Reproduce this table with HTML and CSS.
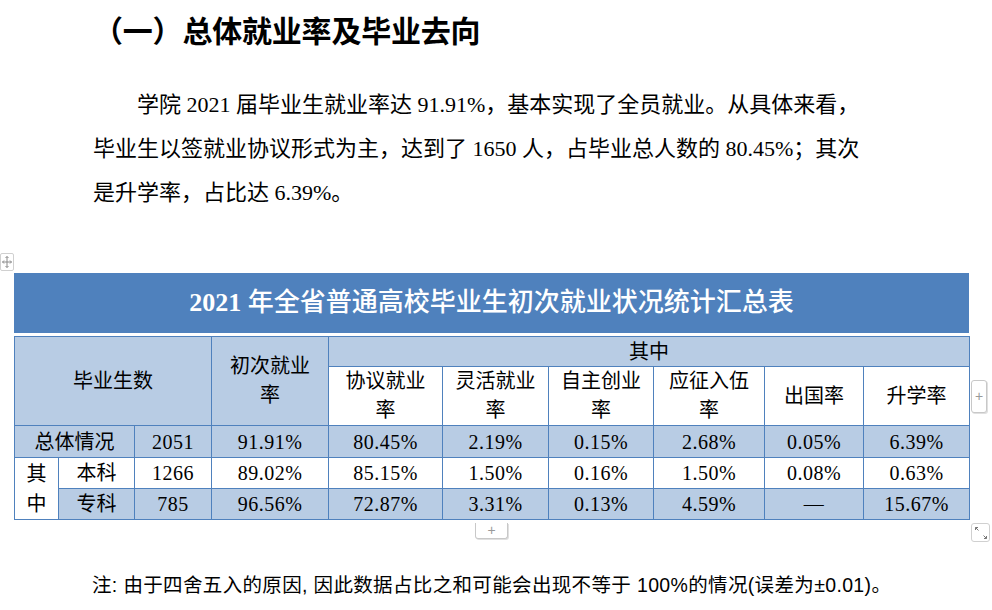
FILE: index.html
```html
<!DOCTYPE html>
<html lang="zh-CN">
<head>
<meta charset="utf-8">
<title>总体就业率及毕业去向</title>
<link rel="stylesheet" href="styles.css">
</head>
<body>
<h1 class="heading">（一）总体就业率及毕业去向</h1>
<p class="intro">学院 2021 届毕业生就业率达 91.91%，基本实现了全员就业。从具体来看，<br>毕业生以签就业协议形式为主，达到了 1650 人，占毕业总人数的 80.45%；其次<br>是升学率，占比达 6.39%。</p>

<div class="table-wrap">
  <div class="move-handle">
    <svg width="12" height="14" viewBox="0 0 12 14" fill="none" stroke="#8a8a8a" stroke-width="1">
      <path d="M6 1.5v11M1.5 7h9"/>
      <path d="M4.5 3L6 1.5 7.5 3M4.5 11L6 12.5 7.5 11M3 5.5L1.5 7 3 8.5M9 5.5L10.5 7 9 8.5"/>
    </svg>
  </div>
  <div class="tbl-title"><span class="year">2021</span> 年全省普通高校毕业生初次就业状况统计汇总表</div>
  <table class="stats">
    <colgroup>
      <col class="c1"><col class="c2"><col class="c3"><col class="c4"><col class="c5">
      <col class="c6"><col class="c7"><col class="c8"><col class="c9"><col class="c10">
    </colgroup>
    <tr class="h1row">
      <td class="fill" colspan="3" rowspan="2">毕业生数</td>
      <td class="fill two" rowspan="2">初次就业<br>率</td>
      <td class="fill" colspan="6">其中</td>
    </tr>
    <tr class="h2row">
      <td class="two">协议就业<br>率</td>
      <td class="two">灵活就业<br>率</td>
      <td class="two">自主创业<br>率</td>
      <td class="two">应征入伍<br>率</td>
      <td>出国率</td>
      <td>升学率</td>
    </tr>
    <tr class="r1 fillrow">
      <td colspan="2">总体情况</td>
      <td class="num">2051</td>
      <td class="num">91.91%</td>
      <td class="num">80.45%</td>
      <td class="num">2.19%</td>
      <td class="num">0.15%</td>
      <td class="num">2.68%</td>
      <td class="num">0.05%</td>
      <td class="num">6.39%</td>
    </tr>
    <tr class="r2">
      <td class="side" rowspan="2">其<br>中</td>
      <td>本科</td>
      <td class="num">1266</td>
      <td class="num">89.02%</td>
      <td class="num">85.15%</td>
      <td class="num">1.50%</td>
      <td class="num">0.16%</td>
      <td class="num">1.50%</td>
      <td class="num">0.08%</td>
      <td class="num">0.63%</td>
    </tr>
    <tr class="r3 fillrow">
      <td>专科</td>
      <td class="num">785</td>
      <td class="num">96.56%</td>
      <td class="num">72.87%</td>
      <td class="num">3.31%</td>
      <td class="num">0.13%</td>
      <td class="num">4.59%</td>
      <td class="num">—</td>
      <td class="num">15.67%</td>
    </tr>
  </table>
  <div class="add-col">+</div>
  <div class="add-row">+</div>
  <div class="resize">
    <svg width="16" height="16" viewBox="0 0 16 16" fill="none" stroke="#777" stroke-width="1">
      <path d="M2.5 2.5l3 3M2.5 2.5h2.5M2.5 2.5v2.5"/>
      <path d="M13.5 13.5l-3-3M13.5 13.5h-2.5M13.5 13.5v-2.5"/>
    </svg>
  </div>
</div>

<p class="note">注: 由于四舍五入的原因, 因此数据占比之和可能会出现不等于 100%的情况(误差为±0.01)。</p>
</body>
</html>
```

FILE: styles.css
```css
html, body {
  margin: 0;
  padding: 0;
  background: #ffffff;
  color: #000000;
}

body {
  font-family: "Liberation Serif", "Noto Sans CJK SC", serif;
}

.heading {
  margin: 0;
  padding: 14px 0 0 93px;
  font-family: "Liberation Serif", "Noto Sans CJK SC", serif;
  font-size: 30px;
  line-height: 36px;
  font-weight: 700;
  letter-spacing: -0.2px;
}

.intro {
  margin: 33px 0 0 0;
  padding-left: 93px;
  font-size: 22px;
  line-height: 44px;
  text-indent: 44px;
  white-space: nowrap;
}

.table-wrap {
  position: relative;
  margin: 58px 0 0 14px;
  width: 955px;
}

.move-handle {
  position: absolute;
  left: -14px;
  top: -20px;
  width: 12px;
  height: 16px;
  border: 1px solid #d0d0d0;
  border-radius: 2px;
  background: #fff;
  display: flex;
  align-items: center;
  justify-content: center;
}

.tbl-title {
  height: 60px;
  background: #4f81bd;
  color: #ffffff;
  font-size: 26px;
  font-weight: 500;
  line-height: 60px;
  text-align: center;
  margin-bottom: 3px;
}

.tbl-title .year {
  font-weight: 700;
}

.stats {
  width: 955px;
  border-collapse: collapse;
  table-layout: fixed;
  font-size: 20px;
}

.c1 { width: 44px; }
.c2 { width: 76px; }
.c3 { width: 77px; }
.c4 { width: 117px; }
.c5 { width: 114px; }
.c6 { width: 106px; }
.c7 { width: 105px; }
.c8 { width: 111px; }
.c9 { width: 99px; }
.c10 { width: 106px; }

.stats td {
  border: 1px solid #4f81bd;
  padding: 0;
  text-align: center;
  vertical-align: middle;
  line-height: 24px;
  background: #ffffff;
}

.stats td.two {
  line-height: 29px;
}

.stats .fill,
.stats .fillrow td {
  background: #b8cce4;
}

.stats .fillrow td.side,
.stats td.side {
  background: #ffffff;
  line-height: 30px;
}

.h1row td { height: 29px; }
.h2row td { height: 58px; }
.r1 td { height: 31px; }
.r2 td { height: 30px; }
.r3 td { height: 30px; }

.num {
  font-family: "Liberation Serif", "Noto Sans CJK SC", serif;
  letter-spacing: 0.5px;
}

.add-col {
  position: absolute;
  left: 957px;
  top: 107px;
  width: 14px;
  height: 31px;
  border: 1px solid #c8c8c8;
  border-radius: 3px;
  box-shadow: 1px 1px 0 #e0e0e0;
  background: #fff;
  color: #999;
  font-family: "Liberation Sans", sans-serif;
  font-size: 14px;
  line-height: 31px;
  text-align: center;
}

.add-row {
  position: absolute;
  left: 461px;
  top: 250px;
  width: 31px;
  height: 15px;
  border: 1px solid #c8c8c8;
  border-top: none;
  border-radius: 0 0 3px 3px;
  box-shadow: 1px 1px 0 #e0e0e0;
  background: #fff;
  color: #999;
  font-family: "Liberation Sans", sans-serif;
  font-size: 14px;
  line-height: 15px;
  text-align: center;
}

.resize {
  position: absolute;
  left: 957px;
  top: 250px;
  width: 17px;
  height: 17px;
  border: 1px solid #d0d0d0;
  border-radius: 3px;
  background: #fff;
  display: flex;
  align-items: center;
  justify-content: center;
}

.note {
  margin: 50px 0 0 0;
  padding-left: 92px;
  font-family: "Liberation Sans", "Noto Sans CJK SC", sans-serif;
  font-size: 19.5px;
  letter-spacing: 0.35px;
  line-height: 30px;
  white-space: nowrap;
}
```
